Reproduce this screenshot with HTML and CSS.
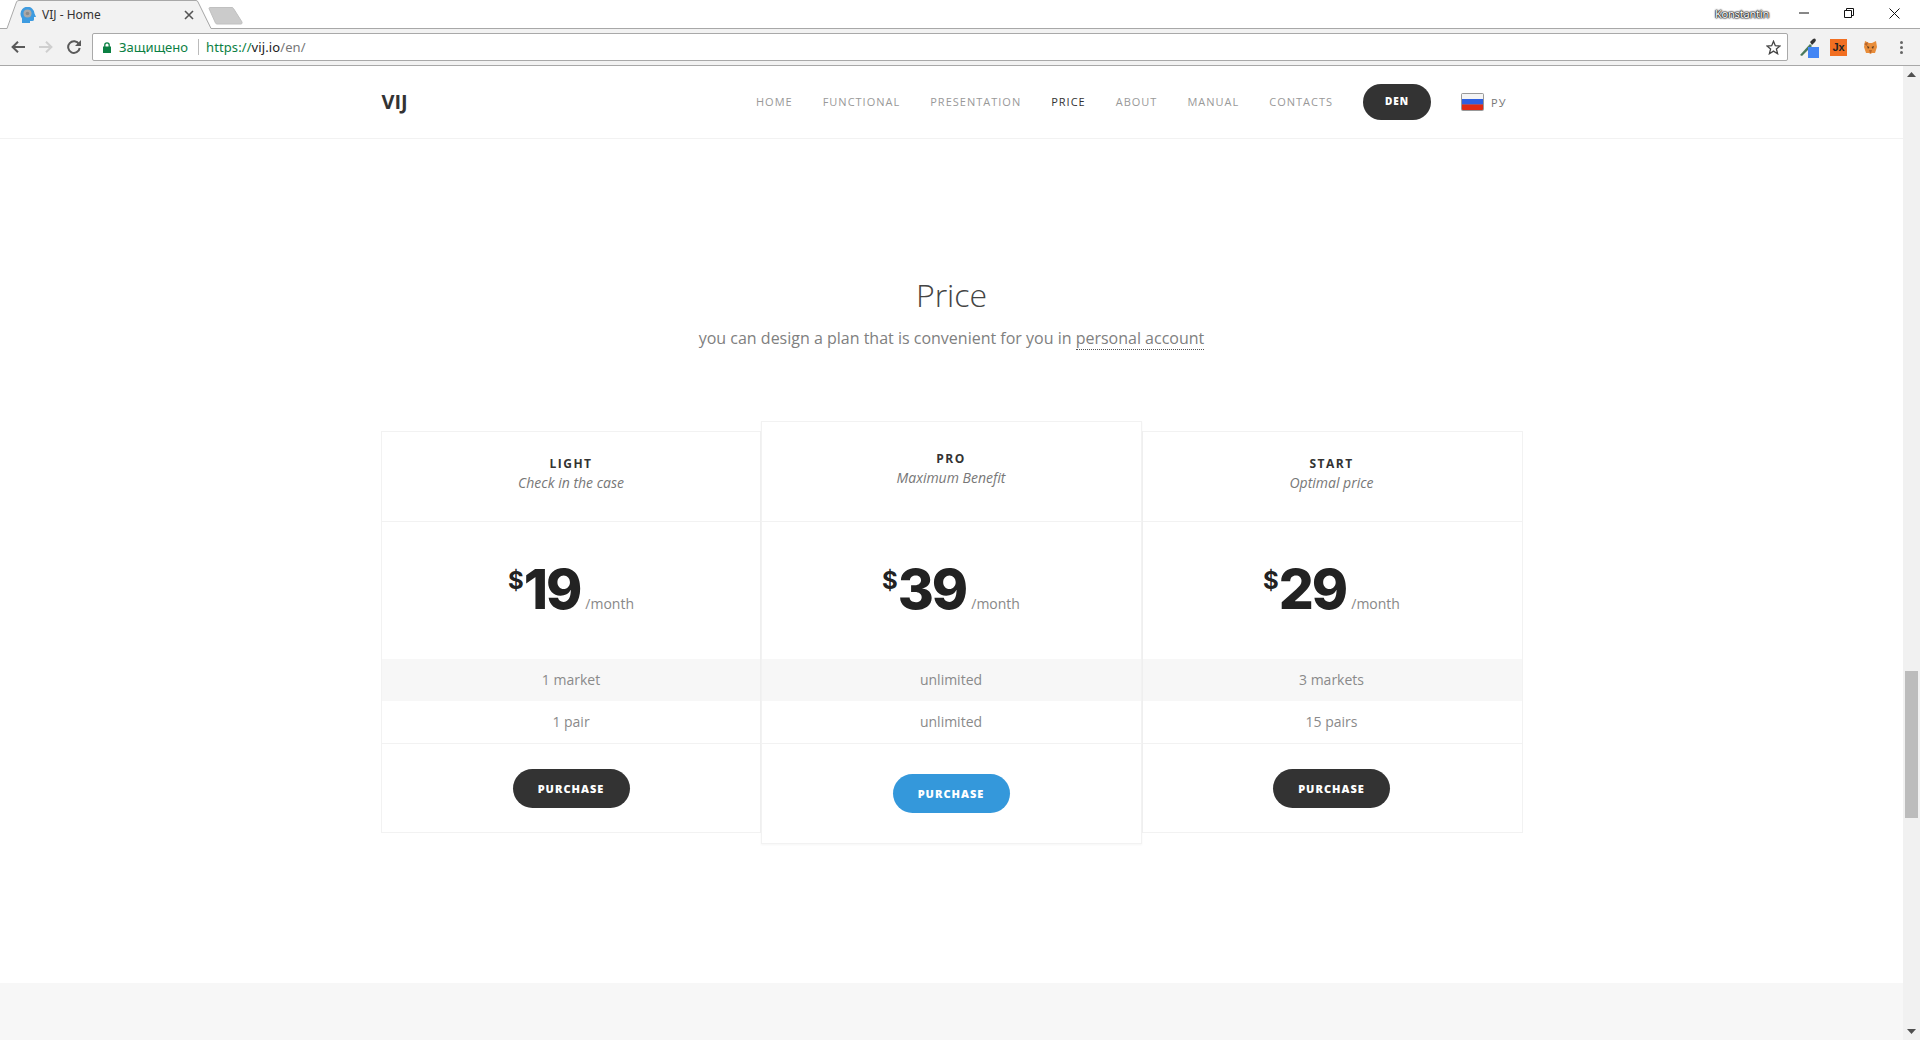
FILE: index.html
```html
<!DOCTYPE html>
<html lang="en">
<head>
  <meta charset="UTF-8">
  <title>VIJ - Home</title>
  <link rel="stylesheet" href="styles.css">
</head>
<body>

  <!-- Browser window top -->
  <div class="titlebar">
    <div class="tab">
      <svg class="tab-shape" width="214" height="29" viewBox="0 0 214 29">
        <path d="M0 28.5H7L17 1.5Q18 .5 19 .5H196Q197.500 .5 198 1.500L212 28.500H214V29H0Z" fill="#f2f2f2"/>
        <path d="M0 28.500H7L16.500 2Q17 .5 19 .5H196Q197.500 .5 198 2L211 28.500H214" fill="none" stroke="#a8a8a8"/>
      </svg>
      <svg class="favicon" width="16" height="16" viewBox="0 0 16 16">
        <path d="M2 16V11.500Q.5 9.500 .5 7A7 7 0 0 1 14.500 6.500L16 10H14V12.500Q14 14 12 14H10V16Z" fill="#3d9be0"/>
        <circle cx="7.500" cy="6.500" r="4" fill="#a9a9a9"/>
        <circle cx="7.500" cy="6.500" r="1.800" fill="#8a8a8a"/>
      </svg>
      <span class="tab-title">VIJ - Home</span>
      <svg class="tab-close" width="10" height="10" viewBox="0 0 10 10">
        <path d="M1 1L9 9M9 1L1 9" stroke="#555" stroke-width="1.600"/>
      </svg>
    </div>
    <svg class="newtab" width="36" height="18" viewBox="0 0 36 18">
      <path d="M1 1.500Q1 .5 2 .5H24Q25 .5 25.500 1.500L34 15Q34.500 17 33 17H9Q8 17 7.500 16Z" fill="#cbcbcb" stroke="#c0c0c0"/>
    </svg>
    <span class="user-name">Konstantin</span>
    <div class="window-btns">
      <svg width="10" height="10" viewBox="0 0 10 10"><path d="M0 5H10" stroke="#111"/></svg>
      <svg width="10" height="10" viewBox="0 0 10 10"><path d="M.5 2.500H7.500V9.500H.5ZM2.500 2.500V.5H9.500V7.500H7.500" fill="none" stroke="#111"/></svg>
      <svg width="11" height="11" viewBox="0 0 11 11"><path d="M.5 .5L10.500 10.500M10.500 .5L.5 10.500" stroke="#111"/></svg>
    </div>
  </div>

  <div class="toolbar">
    <svg class="tool-btn" width="14" height="12" viewBox="0 0 14 12"><path d="M14 6H2M7 .8L1.600 6L7 11.200" fill="none" stroke="#5a5a5a" stroke-width="2"/></svg>
    <svg class="tool-btn" width="14" height="12" viewBox="0 0 14 12"><path d="M0 6H12M7 .8L12.400 6L7 11.200" fill="none" stroke="#cfcfcf" stroke-width="2"/></svg>
    <svg class="tool-btn" width="14" height="14" viewBox="0 0 14 14"><path d="M12 4.200A5.800 5.800 0 1 0 12.700 8" fill="none" stroke="#5a5a5a" stroke-width="2"/><path d="M14 0V6H8Z" fill="#5a5a5a"/></svg>
    <div class="omnibox">
      <svg class="lock" width="8" height="11" viewBox="0 0 8 11"><path d="M0 4.500H8V11H0Z" fill="#0b8043"/><path d="M1.800 5V3A2.200 2.200 0 0 1 6.200 3V5" fill="none" stroke="#0b8043" stroke-width="1.300"/></svg>
      <span class="secure">Защищено</span>
      <span class="url"><span class="url-scheme">https://</span><span class="url-host">vij.io</span>/en/</span>
      <svg class="star" width="15" height="15" viewBox="0 0 15 15"><path d="M7.500 1.300L9.300 5.700L14 6L10.400 9L11.600 13.700L7.500 11.100L3.400 13.700L4.600 9L1 6L5.700 5.700Z" fill="none" stroke="#444" stroke-width="1.300"/></svg>
    </div>
    <div class="extensions">
      <svg width="21" height="21" viewBox="0 0 21 21">
        <path d="M1 18L11 7L13 9L3 19Z" fill="#4a7a5c"/>
        <path d="M11 5L14 2Q15.500 1 16.500 2Q17.500 3.500 16 5L13 8Z" fill="#333"/>
        <rect x="9" y="10" width="11" height="11" fill="#4285f4"/>
      </svg>
      <span class="ext-jx">Jx</span>
      <svg width="13" height="13" viewBox="0 0 13 13">
        <path d="M1 0L5 2H8L12 0L13 6L11 12H8L6.500 13L5 12H2L0 6Z" fill="#e88d3a"/>
        <path d="M3 5L5.500 6L4 8ZM10 5L7.500 6L9 8Z" fill="#5c3a1e"/>
        <path d="M0 3L4 1L3 5ZM5 9H8L7 12H6Z" fill="#b9652a"/>
      </svg>
      <div class="menu-dots"><i></i><i></i><i></i></div>
    </div>
  </div>

  <div class="viewport">
    <div class="page">

      <header class="site-header">
        <div class="container header-row">
          <a class="logo">VIJ</a>
          <nav class="nav">
            <a>Home</a>
            <a>Functional</a>
            <a>Presentation</a>
            <a class="active">Price</a>
            <a>About</a>
            <a>Manual</a>
            <a>Contacts</a>
          </nav>
          <a class="btn-den">DEN</a>
          <a class="lang">
            <svg class="flag" width="23" height="18" viewBox="0 0 23 18">
              <rect width="23" height="18" rx="2" fill="#999"/>
              <rect x="1" y="1" width="21" height="5" fill="#f4f4f4"/>
              <rect x="1" y="6" width="21" height="5.500" fill="#2f5fe0"/>
              <path d="M1 11.500H22V16Q22 17 21 17H2Q1 17 1 16Z" fill="#e02a14"/>
            </svg>
            Ру
          </a>
        </div>
      </header>

      <section class="price-section">
        <div class="container">
          <h2 class="section-title">Price</h2>
          <p class="section-sub">you can design a plan that is convenient for you in <a class="dotted">personal account</a></p>

          <div class="plans">
            <div class="plan">
              <div class="plan-head">
                <div class="plan-name">LIGHT</div>
                <div class="plan-tag">Check in the case</div>
              </div>
              <div class="plan-price"><sup>$</sup><b>19</b><span>/month</span></div>
              <div class="plan-row grey">1 market</div>
              <div class="plan-row">1 pair</div>
              <div class="plan-foot"><a class="btn-buy">PURCHASE</a></div>
            </div>

            <div class="plan featured">
              <div class="plan-head">
                <div class="plan-name">PRO</div>
                <div class="plan-tag">Maximum Benefit</div>
              </div>
              <div class="plan-price"><sup>$</sup><b>39</b><span>/month</span></div>
              <div class="plan-row grey">unlimited</div>
              <div class="plan-row">unlimited</div>
              <div class="plan-foot"><a class="btn-buy blue">PURCHASE</a></div>
            </div>

            <div class="plan last">
              <div class="plan-head">
                <div class="plan-name">START</div>
                <div class="plan-tag">Optimal price</div>
              </div>
              <div class="plan-price"><sup>$</sup><b>29</b><span>/month</span></div>
              <div class="plan-row grey">3 markets</div>
              <div class="plan-row">15 pairs</div>
              <div class="plan-foot"><a class="btn-buy">PURCHASE</a></div>
            </div>
          </div>
        </div>
      </section>

      <div class="next-band"></div>
    </div>

    <div class="scrollbar">
      <svg width="9" height="5" viewBox="0 0 9 5"><path d="M0 5L4.500 0L9 5Z" fill="#505050"/></svg>
      <div class="scroll-track"><div class="scroll-thumb"></div></div>
      <svg width="9" height="5" viewBox="0 0 9 5"><path d="M0 0L4.500 5L9 0Z" fill="#505050"/></svg>
    </div>
  </div>

</body>
</html>
```
FILE: styles.css
```css
* {
  box-sizing: border-box;
}
html, body {
  height: 100%;
}
body {
  margin: 0;
  height: 1040px;
  overflow: hidden;
  display: flex;
  flex-direction: column;
  font-family: "Open Sans", Arial, sans-serif;
  background-color: #fff;
  color: #333;
}

/* Browser top */
.titlebar {
  height: 29px;
  flex: none;
  display: flex;
  align-items: flex-start;
  background-color: #fff;
  position: relative;
  border-bottom: 1px solid #a8a8a8;
}
.tab {
  width: 214px;
  height: 29px;
  flex: none;
  position: relative;
  display: flex;
  align-items: center;
  padding: 0 0 0 20px;
  z-index: 1;
}
.tab-shape {
  position: absolute;
  left: 0;
  top: 0;
}
.favicon, .tab-title, .tab-close {
  position: relative;
}
.favicon {
  flex: none;
}
.tab-title {
  margin-left: 6px;
  font-family: "Noto Sans", Arial, sans-serif;
  font-size: 12px;
  color: #333;
  width: 142px;
}
.tab-close {
  flex: none;
}
.newtab {
  flex: none;
  margin: 7px 0 0 -6px;
}
.user-name {
  margin: 6px 0 0 auto;
  font-family: "Noto Sans", Arial, sans-serif;
  font-size: 11px;
  letter-spacing: -.2px;
  color: #fff;
  text-shadow: 0 0 1px #111, 0 0 1px #111, 0 0 2px #111, 0 0 2px #111;
}
.window-btns {
  display: flex;
  align-items: center;
  gap: 35px;
  height: 26px;
  margin-left: 30px;
  padding-right: 20px;
}
.toolbar {
  height: 37px;
  flex: none;
  display: flex;
  align-items: center;
  background-color: #f2f2f2;
  border-bottom: 1px solid #a8a8a8;
  padding-left: 11px;
}
.tool-btn {
  flex: none;
  margin-right: 14px;
}
.omnibox {
  width: 1696px;
  height: 28px;
  flex: none;
  margin-left: -3px;
  display: flex;
  align-items: center;
  background-color: #fff;
  border: 1px solid #a9a9a9;
  border-radius: 2px;
  padding-left: 10px;
  font-family: "Noto Sans", Arial, sans-serif;
  font-size: 13px;
}
.lock {
  flex: none;
}
.secure {
  margin-left: 8px;
  padding-right: 10px;
  color: #0b8043;
  border-right: 1px solid #bbb;
  line-height: 16px;
}
.url {
  margin-left: 7px;
  letter-spacing: .1px;
  color: #777;
}
.url-scheme {
  color: #0b8043;
}
.url-host {
  color: #222;
}
.star {
  margin-left: auto;
  margin-right: 6px;
}
.extensions {
  display: flex;
  align-items: center;
  flex: 1;
  padding-left: 11px;
}
.ext-jx {
  width: 17px;
  height: 17px;
  margin: 0 17px 0 10px;
  background-color: #f26f21;
  color: #222;
  font-family: "Liberation Sans", sans-serif;
  font-size: 11px;
  font-weight: bold;
  line-height: 17px;
  text-align: center;
}
.menu-dots {
  margin-left: 23px;
  display: flex;
  flex-direction: column;
  gap: 2px;
}
.menu-dots i {
  width: 3px;
  height: 3px;
  background-color: #666;
  border-radius: 50%;
}

/* Page area */
.viewport {
  flex: 1;
  display: flex;
  min-height: 0;
}
.page {
  flex: 1;
  min-width: 0;
  display: flex;
  flex-direction: column;
}
.container {
  width: 1142px;
  margin: 0 auto;
}
.scrollbar {
  width: 17px;
  flex: none;
  background-color: #f1f1f1;
  display: flex;
  flex-direction: column;
  align-items: center;
  padding: 6px 0;
}
.scroll-track {
  flex: 1;
  width: 13px;
  padding-top: 594px;
}
.scroll-thumb {
  height: 147px;
  background-color: #bcbcbc;
}

/* Site header */
.site-header {
  height: 73px;
  flex: none;
  border-bottom: 1px solid #f2f2f2;
}
.header-row {
  height: 72px;
  display: flex;
  align-items: center;
}
.logo {
  margin: -2px 0 0 1px;
  font-size: 20px;
  font-weight: 700;
  color: #333;
}
.nav {
  margin-left: auto;
  margin-top: -1px;
  display: flex;
  gap: 30px;
}
.nav a {
  font-size: 11px;
  text-transform: uppercase;
  letter-spacing: 1px;
  color: #999;
}
.nav a.active {
  color: #333;
}
.btn-den {
  width: 68px;
  height: 36px;
  margin-left: 30px;
  background-color: #333;
  border-radius: 18px;
  color: #fff;
  font-size: 10px;
  font-weight: 800;
  letter-spacing: 1px;
  line-height: 35px;
  text-align: center;
}
.lang {
  display: flex;
  align-items: center;
  gap: 7px;
  margin-left: 30px;
  margin-right: 16px;
  font-size: 11px;
  letter-spacing: 1px;
  text-transform: uppercase;
  color: #777;
}

/* Price section */
.price-section {
  flex: 1;
  padding-top: 136px;
}
.section-title {
  margin: 0;
  font-size: 32px;
  font-weight: 300;
  line-height: 40px;
  color: #444;
  text-align: center;
}
.section-sub {
  margin: 11px 0 0;
  font-size: 16px;
  line-height: 24px;
  color: #808080;
  text-align: center;
}
.dotted {
  border-bottom: 1px dotted #555;
}
.plans {
  margin: 81px 0 0 .5px;
  display: grid;
  grid-template-columns: 380px 381px 381px;
}
.plan {
  border: 1px solid #f2f2f2;
  text-align: center;
  background-color: #fff;
}
/* text in the two right cards sits slightly left of their centre */
.plan.featured > div {
  padding-right: 1px;
}
.plan.last > div {
  padding-right: 2px;
}
.plan-head {
  height: 90px;
  padding-top: 22px;
  border-bottom: 1px solid #f2f2f2;
}
.plan-name {
  font-size: 12px;
  font-weight: 700;
  letter-spacing: 1.500px;
  line-height: 19px;
  color: #333;
}
.plan-tag {
  font-size: 14px;
  font-style: italic;
  line-height: 20px;
  color: #777;
}
.plan-price {
  height: 137px;
  padding-top: 37px;
  display: flex;
  justify-content: center;
  align-items: baseline;
  color: #222;
  line-height: 60px;
}
.plan-price sup {
  font-family: Inter, sans-serif;
  font-size: 24px;
  font-weight: 700;
  line-height: 1;
  align-self: flex-start;
  margin-top: 10px;
}
.plan-price b {
  font-family: Inter, sans-serif;
  font-size: 55px;
  font-weight: 800;
  letter-spacing: -2px;
}
.plan-price span {
  margin-left: 5px;
  font-size: 14px;
  color: #888;
}
.plan-row {
  height: 43px;
  font-size: 14px;
  line-height: 41px;
  color: #8a8a8a;
  border-bottom: 1px solid #f2f2f2;
}
.plan-row.grey {
  height: 42px;
  background-color: #f7f7f7;
  border-bottom: none;
}
.plan-foot {
  padding-top: 25px;
  padding-bottom: 24px;
  display: flex;
  justify-content: center;
}
.btn-buy {
  width: 117px;
  height: 39px;
  background-color: #333;
  border-radius: 20px;
  color: #fff;
  font-size: 11px;
  font-weight: 800;
  letter-spacing: 1px;
  line-height: 39px;
  text-align: center;
}
.btn-buy.blue {
  background-color: #3498db;
}
.plan.featured {
  margin: -10px 0 -11px;
  position: relative;
  z-index: 1;
  box-shadow: 0 1px 2px rgba(0, 0, 0, .04);
}
.plan.featured .plan-head {
  height: 100px;
  padding-top: 27px;
}
.plan.featured .plan-foot {
  padding-top: 30px;
  padding-bottom: 30px;
}
.next-band {
  height: 57px;
  flex: none;
  background-color: #f7f7f7;
}
```
